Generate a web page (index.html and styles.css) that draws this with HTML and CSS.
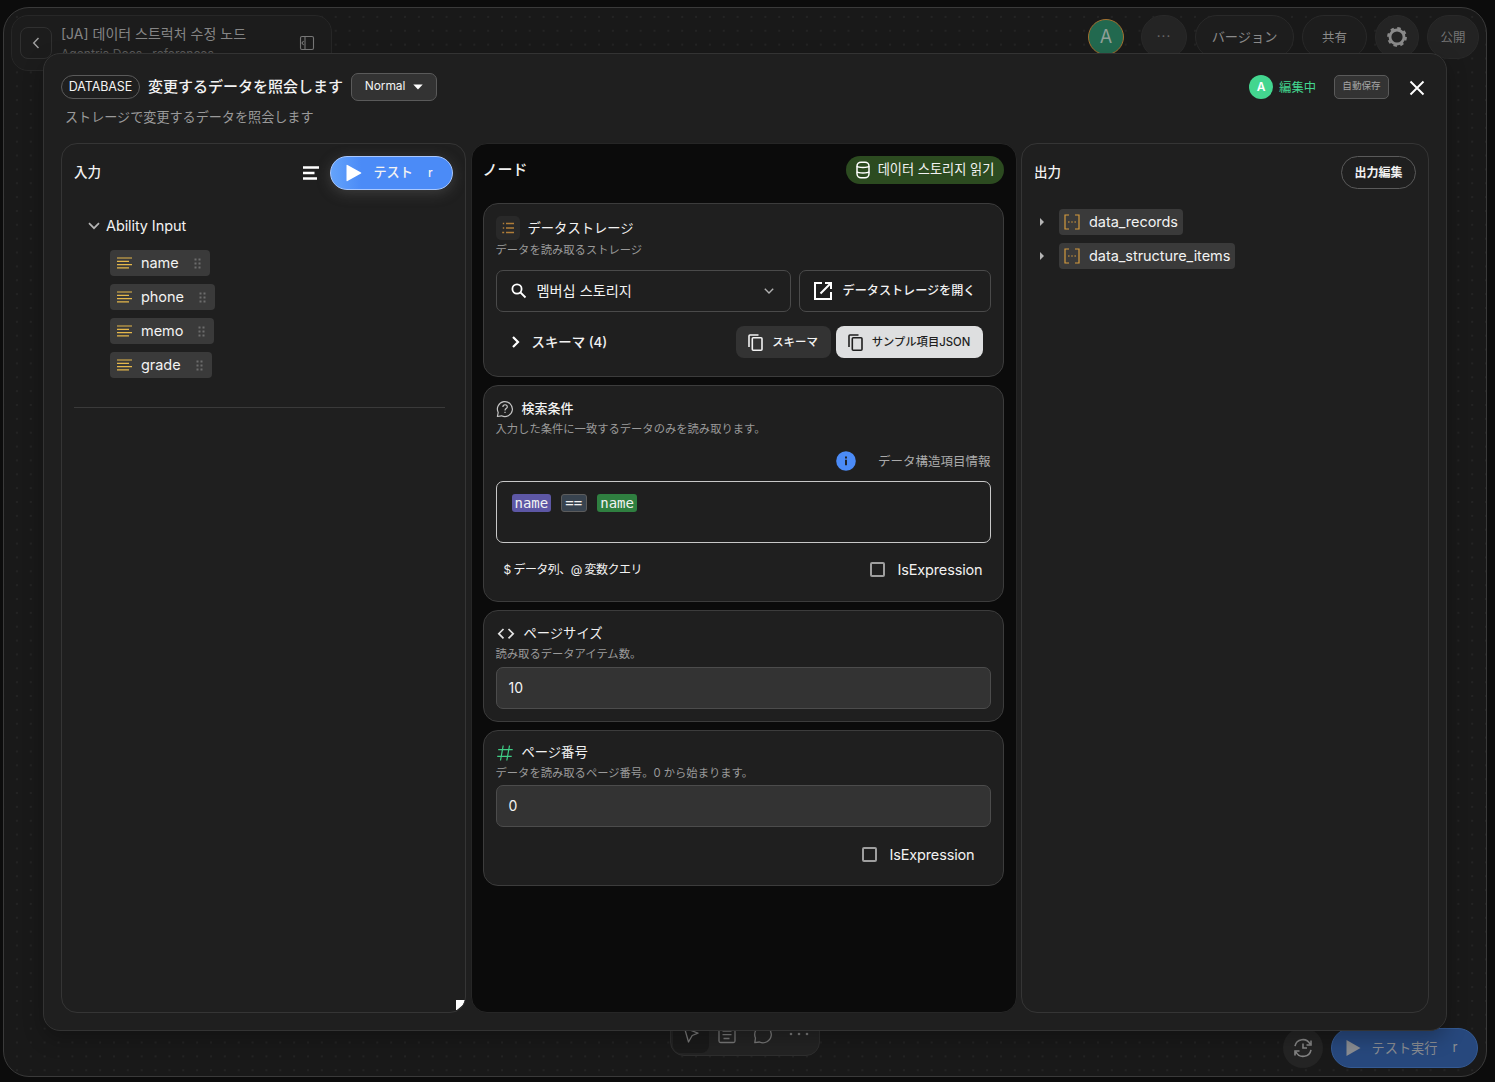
FILE: index.html
```html
<!DOCTYPE html>
<html lang="ja">
<head>
    <meta charset="UTF-8">
    <meta name="viewport" content="width=device-width, initial-scale=1.0">
    <title>[JA] 데이터 스트럭처 수정 노드</title>
    <link rel="stylesheet" href="styles.css">
</head>
<body>
    <div class="app">
        <header class="topbar">
            <div class="project">
                <button class="back-button">
                    <svg width="16" height="16" viewBox="0 0 16 16" fill="none" stroke="currentColor" stroke-width="1.4"><path d="M10.500 3 5.700 8l4.800 5"/></svg>
                </button>
                <div class="project-text">
                    <div class="project-name">[JA] 데이터 스트럭처 수정 노드</div>
                    <div class="project-path">Agentria Docs · references</div>
                </div>
                <svg class="sidebar-icon" width="16" height="16" viewBox="0 0 16 16" fill="none" stroke="currentColor" stroke-width="1.1"><rect x="1.500" y="1.500" width="13" height="13" rx="1.500"/><path d="M6 1.500v13M4.600 6 3 8l1.600 2"/></svg>
            </div>
            <div class="top-actions">
                <div class="avatar">A</div>
                <button class="pill pill-more">···</button>
                <button class="pill pill-version">バージョン</button>
                <button class="pill pill-share">共有</button>
                <button class="pill pill-settings">
                    <svg width="22" height="22" viewBox="0 0 22 22" fill="none" stroke="currentColor"><circle cx="11" cy="11" r="7" stroke-width="2.800"/><circle cx="11" cy="11" r="8.900" stroke-width="2" stroke-dasharray="3.500 3.490"/></svg>
                </button>
                <button class="pill pill-publish">公開</button>
            </div>
        </header>

        <div class="toolbar">
            <div class="tool active">
                <svg width="20" height="20" viewBox="0 0 20 20" fill="none" stroke="currentColor" stroke-width="1.300" stroke-linejoin="round"><path d="M3.500 3 17 8.200l-5.800 2.300L7.500 17z"/></svg>
            </div>
            <div class="tool">
                <svg width="20" height="20" viewBox="0 0 20 20" fill="none" stroke="currentColor" stroke-width="1.300"><rect x="2" y="2" width="16" height="15.500" rx="1.500"/><path d="M5.500 6h9M5.500 9.700h9M6.500 13.500h6"/></svg>
            </div>
            <div class="tool">
                <svg width="20" height="20" viewBox="0 0 20 20" fill="none" stroke="currentColor" stroke-width="1.300" stroke-linejoin="round"><path d="M2.500 13A8.300 8.300 0 1 1 6.500 17L1.800 17.700z"/></svg>
            </div>
            <div class="tool">
                <svg width="20" height="20" viewBox="0 0 20 20" fill="currentColor"><circle cx="2" cy="9" r="1.300"/><circle cx="10" cy="9" r="1.300"/><circle cx="18" cy="9" r="1.300"/></svg>
            </div>
        </div>

        <div class="run-bar">
            <button class="history-button">
                <svg width="20" height="20" viewBox="0 0 20 20" fill="none" stroke="currentColor" stroke-width="1.600"><path d="M2 8.200A8 8 0 0 1 17 6M18 2.500V7h-4.500M18 11.800A8 8 0 0 1 3 14M2 17.500V13h4.500M10 5.500V10h4"/></svg>
            </button>
            <button class="run-button">
                <svg width="16" height="18" viewBox="0 0 16 18" fill="currentColor"><path d="M1.500 1v16L15.500 9z"/></svg>
                <span>テスト実行</span>
                <span>r</span>
            </button>
        </div>
    </div>

    <div class="modal">
        <div class="modal-header">
            <span class="type-badge">DATABASE</span>
            <h1 class="modal-title">変更するデータを照会します</h1>
            <button class="mode-select">
                Normal
                <svg width="10" height="6" viewBox="0 0 10 6" fill="#fff"><path d="M.3.500h9.400L5 5.500z"/></svg>
            </button>
            <div class="editing">
                <span class="editing-avatar">A</span>
                <span>編集中</span>
            </div>
            <button class="autosave">自動保存</button>
            <svg class="close-icon" width="16" height="16" viewBox="0 0 16 16" fill="none" stroke="#fff" stroke-width="1.900"><path d="m1.500 1.500 13 13M14.500 1.500l-13 13"/></svg>
        </div>
        <p class="modal-subtitle">ストレージで変更するデータを照会します</p>

        <div class="panels">
            <section class="panel input-panel">
                <div class="panel-header">
                    <h2>入力</h2>
                    <svg class="align-icon" width="18" height="14" viewBox="0 0 18 14" fill="none" stroke="#fff" stroke-width="2.400"><path d="M1 1.500h16M1 7h11.500M1 12.500h14"/></svg>
                    <button class="test-button">
                        <svg width="16" height="18" viewBox="0 0 16 18" fill="#fff"><path d="M.5 1.200Q.5.400 1.500 1l13.500 7.500q.8.500 0 1L1.500 17q-1 .5-1-.3z"/></svg>
                        <span>テスト</span>
                        <span class="key">r</span>
                    </button>
                </div>
                <div class="tree-root">
                    <svg width="12" height="8" viewBox="0 0 12 8" fill="none" stroke="#b5b5b5" stroke-width="1.700"><path d="m1 1.200 5 5 5-5"/></svg>
                    <span>Ability Input</span>
                </div>
                <div class="field-list" id="fieldList"></div>
                <div class="resize-corner"></div>
            </section>

            <section class="panel node-panel">
                <div class="node-header">
                    <h2>ノード</h2>
                    <span class="node-type">
                        <svg width="16" height="18" viewBox="0 0 16 18" fill="none" stroke="#fff" stroke-width="1.500"><rect x="2" y="1.200" width="12" height="15.600" rx="4"/><path d="M2 5.200c1.500 1.600 10.500 1.600 12 0M2 10.800c1.500 1.600 10.500 1.600 12 0"/></svg>
                        <span>데이터 스토리지 읽기</span>
                    </span>
                </div>

                <div class="card storage-card">
                    <div class="card-title">
                        <span class="icon-box">
                            <svg width="12" height="12" viewBox="0 0 12 12" fill="none" stroke="#b07d38" stroke-width="1.600"><path d="M4 1.500h8M4 6h8M4 10.500h8M.8 1.500h1.400M.8 6h1.400M.2 10.500h2"/></svg>
                        </span>
                        <span>データストレージ</span>
                    </div>
                    <p class="card-desc">データを読み取るストレージ</p>
                    <div class="storage-row">
                        <div class="storage-select">
                            <svg width="16" height="16" viewBox="0 0 16 16" fill="none" stroke="#fff" stroke-width="1.800"><circle cx="6" cy="6" r="4.600"/><path d="m9.500 9.500 5 5"/></svg>
                            <span>멤버십 스토리지</span>
                            <svg class="chevron" width="10" height="6" viewBox="0 0 10 6" fill="none" stroke="#b0b0b0" stroke-width="1.400"><path d="m.8.800 4.200 4.200L9.200.8"/></svg>
                        </div>
                        <button class="open-storage">
                            <svg width="18" height="18" viewBox="0 0 18 18" fill="none" stroke="#fff" stroke-width="2"><path d="M8 1H1v16h16v-7M11 1h6v6M17 1 6.500 11.500"/></svg>
                            <span>データストレージを開く</span>
                        </button>
                    </div>
                    <div class="schema-row">
                        <svg width="8" height="12" viewBox="0 0 8 12" fill="none" stroke="#fff" stroke-width="2.200"><path d="m1 1 5 5-5 5"/></svg>
                        <span class="schema-label">スキーマ (4)</span>
                        <button class="copy-button">
                            <svg width="15" height="17" viewBox="0 0 15 17" fill="none" stroke="currentColor" stroke-width="1.600"><rect x="4.300" y="3.800" width="9.700" height="12.400" rx="1"/><path d="M1 13V2q0-1 1-1h8.500"/></svg>
                            <span>スキーマ</span>
                        </button>
                        <button class="copy-button light">
                            <svg width="15" height="17" viewBox="0 0 15 17" fill="none" stroke="currentColor" stroke-width="1.600"><rect x="4.300" y="3.800" width="9.700" height="12.400" rx="1"/><path d="M1 13V2q0-1 1-1h8.500"/></svg>
                            <span>サンプル項目JSON</span>
                        </button>
                    </div>
                </div>

                <div class="card query-card">
                    <div class="card-title">
                        <svg width="18" height="18" viewBox="0 0 18 18" fill="none" stroke="#c4c4c4" stroke-width="1.200" stroke-linejoin="round"><path d="M2.200 12.500A7.500 7.500 0 1 1 5.500 15.800L1.400 16.500z"/><path d="M6.900 7C6.900 4 11.300 4 11.300 6.900 11.300 8.600 9 8.600 9 10.400M9 11.800v1.300"/></svg>
                        <span>検索条件</span>
                    </div>
                    <p class="card-desc">入力した条件に一致するデータのみを読み取ります。</p>
                    <div class="info-row">
                        <svg width="20" height="20" viewBox="0 0 20 20"><circle cx="10" cy="10" r="9.800" fill="#4b8bf7"/><path d="M10 8.800v5.400M10 5.400v2" stroke="#1f1f1f" stroke-width="1.900"/></svg>
                        <span>データ構造項目情報</span>
                    </div>
                    <div class="query-editor">
                        <code class="token column">name</code>
                        <code class="token operator">==</code>
                        <code class="token variable">name</code>
                    </div>
                    <div class="query-footer">
                        <span class="hint">$ データ列、@ 変数クエリ</span>
                        <label class="expression"><span class="checkbox"></span>IsExpression</label>
                    </div>
                </div>

                <div class="card size-card">
                    <div class="card-title">
                        <svg width="20" height="14" viewBox="0 0 20 14" fill="none" stroke="#e2e2e2" stroke-width="1.700"><path d="m7.500 3-4.700 4.700 4.700 4.700M12.500 3l4.700 4.700-4.700 4.700"/></svg>
                        <span>ページサイズ</span>
                    </div>
                    <p class="card-desc">読み取るデータアイテム数。</p>
                    <div class="number-input">10</div>
                </div>

                <div class="card page-card">
                    <div class="card-title">
                        <svg width="18" height="18" viewBox="0 0 18 18" fill="none" stroke="#3fce86" stroke-width="1.200"><path d="M7.200 1.500 4.500 16.500M13.500 1.500l-2.700 15M2.200 5.700h14.500M1.200 12.300h14.500"/></svg>
                        <span>ページ番号</span>
                    </div>
                    <p class="card-desc">データを読み取るページ番号。0 から始まります。</p>
                    <div class="number-input">0</div>
                    <label class="expression"><span class="checkbox"></span>IsExpression</label>
                </div>
            </section>

            <section class="panel output-panel">
                <div class="panel-header">
                    <h2>出力</h2>
                    <button class="edit-output">出力編集</button>
                </div>
                <div class="output-list" id="outputList"></div>
            </section>
        </div>
    </div>

    <script>
        const fields = ['name', 'phone', 'memo', 'grade'];
        const outputs = ['data_records', 'data_structure_items'];

        const textIcon = '<svg width="15" height="12" viewBox="0 0 15 12" fill="none" stroke="#e5b84b" stroke-width="1.200"><path d="M0 1h15M0 4.300h12M0 7.600h15M0 10.900h12"/></svg>';
        const dragIcon = '<svg class="drag" width="7" height="11" viewBox="0 0 7 11" fill="#6c6c6c"><path d="M.5.500h2v2h-2zM4.500.500h2v2h-2zM.5 4.500h2v2h-2zM4.500 4.500h2v2h-2zM.5 8.500h2v2h-2zM4.500 8.500h2v2h-2z"/></svg>';
        const arrayIcon = '<svg width="16" height="16" viewBox="0 0 16 16" fill="none" stroke="#d39a3e" stroke-width="1.200"><path d="M5 1H1v14h4M11 1h4v14h-4M4 8h1.600M7.200 8h1.600M10.400 8H12"/></svg>';

        document.getElementById('fieldList').innerHTML = fields.map(name =>
            '<div class="chip">' + textIcon + '<span>' + name + '</span>' + dragIcon + '</div>'
        ).join('');

        document.getElementById('outputList').innerHTML = outputs.map(name =>
            '<div class="output-row"><span class="arrow"></span><div class="chip">' + arrayIcon + '<span>' + name + '</span></div></div>'
        ).join('');
    </script>
</body>
</html>
```

FILE: styles.css
```css
* {
    margin: 0;
    padding: 0;
    box-sizing: border-box;
}
body {
    width: 100%;
    height: 100vh;
    padding: 7px 8px 5px 3px;
    overflow: hidden;
    background: #0c0c0c;
    color: #f2f2f2;
    font-family: Inter, "Noto Sans CJK JP", "Noto Sans CJK KR", sans-serif;
    font-size: 14px;
}
button {
    display: flex;
    align-items: center;
    justify-content: center;
    padding-bottom: 2px;
    font-family: inherit;
    color: inherit;
    background: none;
    border: none;
    white-space: nowrap;
}
svg {
    flex: none;
}

/* canvas behind the dialog */
.app {
    position: relative;
    height: 100%;
    padding: 7px;
    border: 1px solid #3a3a3a;
    border-radius: 26px;
    background-color: #191919;
    background-image: radial-gradient(circle, #292929 0.6px, transparent 0.9px);
    background-size: 13.86px 13.86px;
    background-position: 6px 2px;
    color: #858585;
}
.topbar {
    display: flex;
    justify-content: space-between;
}
.project {
    display: flex;
    align-items: center;
    width: 321px;
    height: 56px;
    padding: 0 16px 0 8px;
    background: #1c1c1c;
    border: 1px solid #272727;
    border-radius: 17px;
}
.back-button {
    width: 32px;
    height: 32px;
    padding: 0;
    border: 1px solid #303030;
    border-radius: 8px;
    color: #a0a0a0;
}
.project-text {
    flex: 1;
    padding: 1px 0 0 9px;
    line-height: 19px;
    white-space: nowrap;
}
.project-name {
    font-size: 14px;
    letter-spacing: 0;
}
.project-path {
    padding-top: 1px;
    font-size: 12.100px;
    color: #5c5c5c;
}
.sidebar-icon {
    color: #777;
}
.top-actions {
    display: flex;
    align-items: flex-start;
    gap: 8px;
}
.avatar {
    width: 36px;
    height: 36px;
    margin: 4px 9px 0 0;
    border: 1px solid #a5702f;
    border-radius: 50%;
    background: #22694f;
    color: #8f9f98;
    font-size: 18px;
    line-height: 34px;
    text-align: center;
}
.pill {
    height: 44px;
    border: 1px solid #292929;
    border-radius: 22px;
    background: #1d1d1d;
    color: #8a8a8a;
    font-size: 13.200px;
}
.pill-more {
    width: 46px;
    background: #242424;
    color: #666;
    letter-spacing: 1px;
}
.pill-version {
    width: 99px;
}
.pill-share {
    width: 65px;
    font-size: 12.500px;
}
.pill-settings {
    width: 44px;
    padding: 0;
    background: #242424;
    color: #8a8a8a;
}
.pill-publish {
    width: 52px;
    background: #232323;
    color: #757575;
    font-size: 12.500px;
}
.toolbar {
    position: absolute;
    left: 666px;
    bottom: 20px;
    display: flex;
    width: 150px;
    height: 45px;
    padding: 5px 2px;
    border: 1px solid #2e2e2e;
    border-radius: 14px;
    background: #232323;
    color: #777;
}
.tool {
    display: flex;
    align-items: center;
    justify-content: center;
    width: 36px;
    height: 36px;
}
.tool.active {
    border-radius: 8px;
    background: #1a1a1a;
}
.run-bar {
    position: absolute;
    right: 8px;
    bottom: 8px;
    display: flex;
    gap: 8px;
}
.history-button {
    width: 40px;
    height: 40px;
    padding: 0;
    border-radius: 50%;
    background: #242424;
    color: #858585;
}
.run-button {
    width: 147px;
    height: 40px;
    padding: 0 3px 0 0;
    gap: 11px;
    border: 1px solid #345a93;
    border-radius: 20px;
    background: #27487d;
    color: #8a8d92;
    font-size: 13.200px;
}
.run-button span {
    padding-bottom: 2px;
}
.run-button span + span {
    margin: 0 4px;
}

/* dialog */
.modal {
    position: absolute;
    left: 43px;
    top: 53px;
    width: 1404px;
    height: 978px;
    padding: 18px 17px 17px;
    border: 1px solid #333;
    border-radius: 17px;
    background: #1f1f1f;
    box-shadow: 0 8px 20px rgba(0, 0, 0, 0.25);
}
.modal-header {
    display: flex;
    align-items: center;
    height: 29px;
}
.type-badge {
    width: 79px;
    height: 24px;
    border: 1px solid #5a5a5a;
    border-radius: 12px;
    font-size: 12.500px;
    letter-spacing: -0.1px;
    line-height: 22px;
    text-align: center;
}
.modal-title {
    margin-left: 8px;
    font-size: 15px;
    font-weight: 500;
    line-height: 28px;
}
.mode-select {
    width: 86px;
    height: 28px;
    margin-left: 8px;
    gap: 8px;
    border: 1px solid #5a5a5a;
    border-radius: 7px;
    background: #333;
    font-size: 12px;
    letter-spacing: -0.1px;
}
.mode-select svg {
    margin-top: 3px;
}
.editing {
    display: flex;
    align-items: center;
    margin-left: auto;
    gap: 6px;
    color: #43d68f;
    font-size: 12.300px;
}
.editing-avatar {
    width: 24px;
    height: 24px;
    border-radius: 50%;
    background: #43d68f;
    color: #fff;
    font-size: 12px;
    font-weight: 600;
    line-height: 24px;
    text-align: center;
}
.autosave {
    width: 55px;
    height: 24px;
    margin-left: 18px;
    padding-bottom: 3px;
    border: 1px solid #5a5a5a;
    border-radius: 5px;
    background: #333;
    color: #a5a5a5;
    font-size: 9.600px;
}
.close-icon {
    margin: 2px 4px 0 20px;
}
.modal-subtitle {
    height: 42px;
    padding: 6px 0 0 4px;
    color: #9a9a9a;
    font-size: 13.100px;
    line-height: 20px;
}
.panels {
    display: grid;
    grid-template-columns: 405px 546px 408px;
    justify-content: space-between;
    height: 870px;
}
.panel {
    position: relative;
    padding: 12px;
    border: 1px solid #353535;
    border-radius: 16px;
    overflow: hidden;
}
.panel h2 {
    font-size: 13.500px;
    font-weight: 500;
    line-height: 20px;
}
.panel-header {
    display: flex;
    align-items: center;
    height: 34px;
}
.panel-header h2 {
    padding-bottom: 2px;
}

/* input */
.align-icon {
    margin-left: auto;
}
.test-button {
    width: 123px;
    height: 34px;
    margin-left: 10px;
    padding: 0;
    gap: 11px;
    border: 1px solid #a9c8ff;
    border-radius: 17px;
    background: linear-gradient(90deg, #64a3fb, #4b8bf7 25%);
    box-shadow: 0 3px 14px rgba(120, 120, 120, 0.35);
    font-size: 13.200px;
    font-weight: 500;
}
.test-button span {
    padding-bottom: 3px;
}
.test-button .key {
    margin: 0 4px;
    padding-bottom: 1px;
    font-size: 12px;
}
.tree-root {
    display: flex;
    align-items: center;
    height: 20px;
    margin-top: 26px;
    padding-left: 14px;
    gap: 6px;
    font-size: 14.500px;
    letter-spacing: -0.1px;
}
.tree-root span {
    padding-bottom: 1px;
}
.field-list {
    display: flex;
    flex-direction: column;
    align-items: flex-start;
    gap: 8px;
    height: 172px;
    margin-right: 8px;
    padding: 14px 0 0 36px;
    border-bottom: 1px solid #3a3a3a;
}
.chip {
    display: flex;
    align-items: center;
    height: 26px;
    padding: 0 9px 0 7px;
    border-radius: 4px;
    background: #3a3a3a;
    font-size: 14.500px;
    letter-spacing: -0.05px;
}
.chip span {
    margin-left: 9px;
    padding-bottom: 1px;
}
.chip .drag {
    margin-left: 15px;
}
.resize-corner {
    position: absolute;
    right: 0;
    bottom: 2px;
    width: 9px;
    height: 10px;
    background: #fff;
    clip-path: polygon(0 0, 100% 0, 78% 50%, 10% 100%, 0 100%);
}

/* node */
.node-panel {
    display: flex;
    flex-direction: column;
    gap: 8px;
    padding: 12px 12px 12px 11px;
    background: #0b0b0b;
    border-color: #262626;
}
.node-header {
    display: flex;
    justify-content: space-between;
    height: 39px;
}
.node-header h2 {
    padding-top: 4px;
    font-size: 15px;
}
.node-type {
    display: flex;
    align-items: center;
    justify-content: center;
    width: 158px;
    height: 28px;
    gap: 7px;
    border-radius: 14px;
    background: #2c4b20;
    font-size: 13.200px;
}
.node-type span {
    padding-bottom: 3px;
}
.card {
    flex: none;
    padding: 12px;
    border: 1px solid #3c3c3c;
    border-radius: 15px;
    background: #1f1f1f;
}
.storage-card {
    height: 174px;
}
.query-card {
    height: 217px;
}
.size-card {
    height: 112px;
}
.page-card {
    height: 156px;
}
.card-title {
    display: flex;
    align-items: center;
    height: 20px;
    gap: 8px;
    font-size: 13.300px;
}
.card-title span:last-child {
    padding-bottom: 2px;
}
.card-desc {
    height: 20px;
    color: #9a9a9a;
    font-size: 11.300px;
    line-height: 21px;
}
.icon-box {
    display: flex;
    align-items: center;
    justify-content: center;
    width: 24px;
    height: 24px;
    border-radius: 5px;
    background: #292929;
}
.storage-card .card-title {
    height: 24px;
}
.storage-row {
    display: flex;
    gap: 8px;
    margin-top: 10px;
}
.storage-select,
.open-storage {
    display: flex;
    align-items: center;
    height: 42px;
    padding-bottom: 0;
    border: 1px solid #4a4a4a;
    border-radius: 7px;
}
.storage-select {
    width: 295px;
    padding: 0 16px 0 14px;
    gap: 10px;
    font-size: 14.200px;
}
.storage-select span,
.open-storage span {
    padding-bottom: 3px;
}
.chevron {
    margin-left: auto;
}
.open-storage {
    width: 192px;
    gap: 11px;
    font-size: 12.100px;
    font-weight: 500;
}
.schema-row {
    display: flex;
    align-items: center;
    height: 32px;
    margin-top: 14px;
    padding: 0 8px 0 16px;
    gap: 5px;
}
.schema-label {
    margin: 0 auto 0 7px;
    padding-bottom: 2px;
    font-size: 13.400px;
    font-weight: 500;
}
.copy-button {
    width: 95px;
    height: 32px;
    padding: 0;
    gap: 9px;
    border-radius: 8px;
    background: #333;
    font-size: 11.400px;
    font-weight: 500;
}
.copy-button span {
    padding-bottom: 2px;
}
.copy-button.light {
    width: 147px;
    background: #dedfe0;
    color: #1f1f1f;
    font-size: 11.300px;
}
.query-card .card-title {
    height: 21px;
    font-size: 13px;
    font-weight: 500;
}
.info-row {
    display: flex;
    align-items: center;
    justify-content: flex-end;
    height: 20px;
    margin: 12px 0 10px;
    gap: 22px;
    color: #aaa;
    font-size: 12.500px;
}
.info-row span {
    padding-bottom: 2px;
}
.query-editor {
    display: flex;
    align-items: flex-start;
    height: 62px;
    padding: 12px 15px;
    gap: 10px;
    border: 1px solid #c8c8c8;
    border-radius: 7px;
}
.token {
    height: 18px;
    padding: 0 3px;
    border-radius: 3px;
    font-family: "DejaVu Sans Mono", monospace;
    font-size: 14px;
    line-height: 18px;
}
.column {
    background: #5d57a5;
}
.operator {
    width: 26px;
    border: 1px solid #5c5c5c;
    background: #38434f;
    line-height: 17px;
}
.variable {
    background: #2f7f40;
}
.query-footer {
    display: flex;
    align-items: center;
    justify-content: space-between;
    height: 53px;
    padding: 0 8px;
}
.hint {
    padding-bottom: 3px;
    font-size: 12px;
    letter-spacing: -0.55px;
}
.expression {
    display: flex;
    align-items: center;
    gap: 12px;
    font-size: 14.500px;
    letter-spacing: -0.15px;
}
.checkbox {
    width: 15px;
    height: 15px;
    border: 2px solid #9e9e9e;
    border-radius: 2px;
}
.number-input {
    height: 42px;
    padding-left: 12px;
    border: 1px solid #4c4c4c;
    border-radius: 7px;
    background: #333;
    font-size: 14px;
    line-height: 39px;
}
.size-card .card-title {
    margin-bottom: 1px;
}
.size-card .number-input {
    margin-top: 3px;
}
.page-card .card-title {
    height: 19px;
}
.page-card .card-desc {
    padding-top: 1px;
    margin-bottom: 3px;
}
.page-card .expression {
    justify-content: flex-end;
    height: 54px;
    padding-right: 16px;
}

/* output */
.edit-output {
    width: 75px;
    height: 33px;
    margin: -1px 0 0 auto;
    border: 1px solid #5a5a5a;
    border-radius: 17px;
    font-size: 12px;
    font-weight: 600;
}
.output-list {
    display: flex;
    flex-direction: column;
    gap: 8px;
    margin-top: 19px;
}
.output-row {
    display: flex;
    align-items: center;
}
.output-row .arrow {
    margin: 0 15px 0 6px;
    border: 4px solid transparent;
    border-left-color: #b5b5b5;
    border-right: none;
}
.output-row .chip {
    padding: 0 5px 0 5px;
}
.output-row .chip span {
    margin-left: 9px;
}
```
